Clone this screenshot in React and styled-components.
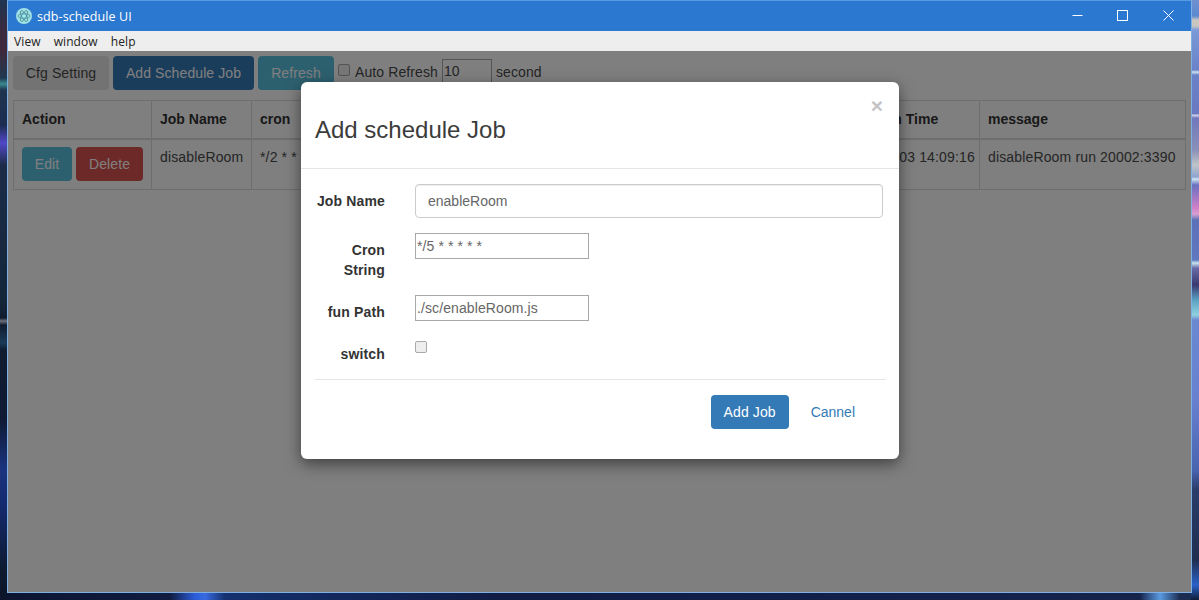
import React from "react";
import styled, { createGlobalStyle } from "styled-components";

const TEXT = "#333333";
const SOFT = "#4a4a4a";
const LINE = "#dddddd";

const Global = createGlobalStyle`
  html, body {
    margin: 0;
    height: 100%;
    overflow: hidden;
    background: #0d1a35;
  }
  * { box-sizing: border-box; }
  #root { height: 100%; }
`;

// wallpaper only shows as a thin strip on three sides of the window
const Desktop = styled.div`
  width: 1199px;
  height: 600px;
  padding: 0 7px;
  background:
    linear-gradient(180deg,
      #6f8fd0 0, #5b8ad0 16px, #c9c6c0 20px, #c9c6c0 26px, #7a9ad8 30px,
      #6a82c8 70px, #cfe2f2 72px, #6a82c8 75px,
      #6a78c0 114px, #d8dcec 115px, #7078bc 118px,
      #8a90b8 150px, #c0c4c8 165px, #8fa4d0 177px, #d0e4f0 179px, #6c70c0 185px,
      #d080c8 208px, #d8a0d0 214px, #5c70b8 220px,
      #5f78c0 260px, #c8e4f0 263px, #6a6aa8 268px, #3a3a70 285px,
      #5aa0c0 300px, #90d0e0 315px, #6a88d0 320px,
      #6880d0 400px, #4a64b0 470px, #2a3c68 490px, #1f2e50 560px, #2a62c8 585px, #0f1c38 600px)
      right top / 8px 600px no-repeat,
    linear-gradient(180deg,
      #1f3550 0, #3a2a40 30px, #40283c 50px, #1f3a50 78px, #3a8a90 84px, #1f3550 90px,
      #1c2c50 125px, #5048c8 143px, #1c2c48 165px,
      #14263a 300px, #101c30 318px, #70707c 321px, #101c30 325px,
      #1a3a58 343px, #0f1c30 350px,
      #0f1a34 420px, #1a3480 470px, #14286a 510px, #0d1a30 570px, #0b1428 600px)
      left top / 7px 600px no-repeat,
    linear-gradient(90deg,
      #0b1530 0, #101c40 170px, #2c5cd8 195px, #3a6ae0 205px, #14306e 225px,
      #101c44 500px, #12204a 900px, #16244c 1140px, #5a9ae0 1160px, #1c2c50 1180px)
      left bottom / 100% 7px no-repeat,
    #0d1a35;
`;

const Window = styled.div`
  height: 593px;
  display: flex;
  flex-direction: column;
  border: 1px solid #7fb0e4;
  border-top-color: #5a9ae0;
  font-family: "Liberation Sans", Arial, sans-serif;
  font-size: 14px;
  color: ${TEXT};
`;

const TitleBar = styled.div`
  flex: 0 0 30px;
  display: flex;
  align-items: center;
  padding-left: 8px;
  background: #2b78d0;
  color: #fff;
`;

const AppIcon = styled.svg`
  width: 16px;
  height: 16px;
  margin-right: 5px;
`;

const AppTitle = styled.span`
  font-family: "Open Sans", "Noto Sans", sans-serif;
  font-size: 12.5px;
  letter-spacing: 0.1px;
  flex: 1;
`;

const WinButton = styled.div`
  width: ${(p) => p.$w}px;
  height: 30px;
  padding-bottom: 1px;
  display: flex;
  align-items: center;
  justify-content: center;
`;

const MenuBar = styled.div`
  flex: 0 0 20px;
  display: flex;
  align-items: center;
  gap: 13px;
  padding-left: 6px;
  background: #eeeeee;
  font-family: "Open Sans", "Noto Sans", sans-serif;
  font-size: 12px;
  letter-spacing: 0.1px;
  color: #222;
`;

const Content = styled.div`
  position: relative;
  flex: 1;
  background: #fff;
  padding: 5px 5px 0 5px;
`;

const Toolbar = styled.div`
  display: flex;
  align-items: flex-start;
  gap: 4px;
  height: 44px;
`;

const tones = {
  default: { bg: "#e6e6e6", fg: SOFT, w: 96 },
  primary: { bg: "#337ab7", fg: "#fff", w: 141 },
  info: { bg: "#5bc0de", fg: "#fff", w: 76 },
  danger: { bg: "#d9534f", fg: "#fff", w: 67 },
};

const Btn = styled.div`
  flex: none;
  height: 34px;
  width: ${(p) => (p.$w ? p.$w : tones[p.$tone].w)}px;
  display: flex;
  align-items: center;
  justify-content: center;
  border-radius: 4px;
  letter-spacing: 0.1px;
  background: ${(p) => tones[p.$tone].bg};
  color: ${(p) => tones[p.$tone].fg};
`;

const BoxCheck = styled.span`
  flex: none;
  width: 12px;
  height: 12px;
  margin-top: ${(p) => p.$top}px;
  margin-right: 1px;
  border: 1px solid #a9a9a9;
  border-radius: 2px;
  background: #eeeeee;
`;

const AutoLabel = styled.span`
  line-height: 20px;
  margin-top: 6px;
  letter-spacing: 0.1px;
  color: ${SOFT};
`;

const SmallInput = styled.div`
  flex: none;
  width: 50px;
  height: 26px;
  margin-top: 3px;
  padding: 3px 1px;
  border: 1px solid #a9a9a9;
  color: ${SOFT};
`;

const Table = styled.table`
  width: 1173px;
  table-layout: fixed;
  border-collapse: collapse;
  border: 1px solid ${LINE};
`;

const Th = styled.th`
  height: 38px;
  padding: 8px;
  text-align: left;
  font-weight: 700;
  white-space: nowrap;
  overflow: hidden;
  border: 1px solid ${LINE};
  border-bottom-width: 2px;
`;

const Td = styled.td`
  height: 50px;
  padding: 7px 8px 8px;
  vertical-align: top;
  white-space: nowrap;
  overflow: hidden;
  line-height: 20px;
  letter-spacing: 0.15px;
  color: ${SOFT};
  border: 1px solid ${LINE};
`;

const ActionCell = styled.div`
  display: flex;
  gap: 4px;
`;

const Backdrop = styled.div`
  position: absolute;
  inset: 0;
  background: rgba(0, 0, 0, 0.5);
`;

const ModalLayer = styled.div`
  position: absolute;
  left: 0;
  right: 0;
  top: 31px;
  display: flex;
  justify-content: center;
`;

const Modal = styled.div`
  width: 598px;
  margin-left: 1px;
  background: #fff;
  border-radius: 6px;
  box-shadow: 0 5px 15px rgba(0, 0, 0, 0.5);
`;

const ModalHeader = styled.div`
  position: relative;
  height: 87px;
  padding: 32px 14px 0;
  border-bottom: 1px solid #e5e5e5;
`;

const ModalTitle = styled.div`
  font-size: 24px;
  line-height: 32px;
  color: #3c3c3c;
`;

const Close = styled.span`
  position: absolute;
  top: 12px;
  right: 16px;
  font-size: 21px;
  font-weight: 700;
  line-height: 24px;
  color: #c4c4c4;
`;

const ModalBody = styled.div`
  padding: 15px 15px 0 15px;
  height: 210px;
`;

const Divider = styled.div`
  border-top: 1px solid #e5e5e5;
  margin: 0 13px 0 14px;
`;

const Row = styled.div`
  display: flex;
  gap: 30px;
  margin-bottom: 15px;
`;

const Label = styled.label`
  flex: 0 0 69px;
  margin-top: 7px;
  text-align: right;
  font-weight: 700;
  line-height: 20px;
  letter-spacing: 0.15px;
`;

const TextInput = styled.div`
  flex: 1;
  height: 34px;
  margin-right: 1px;
  padding: 6px 12px;
  line-height: 20px;
  border: 1px solid #ccc;
  border-radius: 4px;
  color: #666;
  box-shadow: inset 0 1px 1px rgba(0, 0, 0, 0.075);
`;

const PlainInput = styled.div`
  flex: none;
  width: 174px;
  height: 26px;
  padding: 2px 1px;
  line-height: 20px;
  letter-spacing: 0.1px;
  border: 1px solid #a9a9a9;
  color: #666;
`;

const ModalFooter = styled.div`
  display: flex;
  align-items: center;
  justify-content: flex-end;
  padding: 15px 44px 30px 0;
`;

const SubmitBtn = styled.div`
  width: 78px;
  height: 34px;
  display: flex;
  align-items: center;
  justify-content: center;
  border-radius: 4px;
  letter-spacing: 0.1px;
  background: #337ab7;
  color: #fff;
`;

const CancelLink = styled.span`
  margin-left: 22px;
  color: #337ab7;
`;

export default function App() {
  return (
    <Desktop>
      <Global />
      <Window>
        <TitleBar>
          <AppIcon viewBox="0 0 16 16">
            <circle cx="8" cy="8" r="8" fill="#9fe0e4" />
            <g fill="none" stroke="#4a8f9a" strokeWidth="0.8">
              <ellipse cx="8" cy="8" rx="6" ry="2.4" />
              <ellipse cx="8" cy="8" rx="6" ry="2.4" transform="rotate(60 8 8)" />
              <ellipse cx="8" cy="8" rx="6" ry="2.4" transform="rotate(120 8 8)" />
            </g>
          </AppIcon>
          <AppTitle>sdb-schedule UI</AppTitle>
          <WinButton $w={45}>
            <svg width="11" height="11" viewBox="0 0 11 11">
              <path d="M0.5 5.5h10" stroke="#fff" strokeWidth="1" />
            </svg>
          </WinButton>
          <WinButton $w={45}>
            <svg width="11" height="11" viewBox="0 0 11 11">
              <rect x="0.5" y="0.5" width="10" height="10" fill="none" stroke="#fff" />
            </svg>
          </WinButton>
          <WinButton $w={46}>
            <svg width="11" height="11" viewBox="0 0 11 11">
              <path d="M0.5 0.5l10 10M10.5 0.5l-10 10" stroke="#fff" strokeWidth="1" />
            </svg>
          </WinButton>
        </TitleBar>
        <MenuBar>
          <span>View</span>
          <span>window</span>
          <span>help</span>
        </MenuBar>
        <Content>
          <Toolbar>
            <Btn $tone="default">Cfg Setting</Btn>
            <Btn $tone="primary">Add Schedule Job</Btn>
            <Btn $tone="info">Refresh</Btn>
            <BoxCheck $top={8} />
            <AutoLabel>Auto Refresh</AutoLabel>
            <SmallInput>10</SmallInput>
            <AutoLabel>second</AutoLabel>
          </Toolbar>
          <Table>
            <colgroup>
              <col style={{ width: 138 }} />
              <col style={{ width: 100 }} />
              <col style={{ width: 150 }} />
              <col style={{ width: 160 }} />
              <col style={{ width: 100 }} />
              <col style={{ width: 172 }} />
              <col style={{ width: 146 }} />
              <col />
            </colgroup>
            <thead>
              <tr>
                <Th>Action</Th>
                <Th>Job Name</Th>
                <Th>cron</Th>
                <Th />
                <Th />
                <Th />
                <Th>Last Run Time</Th>
                <Th>message</Th>
              </tr>
            </thead>
            <tbody>
              <tr>
                <Td>
                  <ActionCell>
                    <Btn $tone="info" $w={50}>Edit</Btn>
                    <Btn $tone="danger">Delete</Btn>
                  </ActionCell>
                </Td>
                <Td>disableRoom</Td>
                <Td>*/2 * * * * *</Td>
                <Td />
                <Td />
                <Td />
                <Td>2018-01-03 14:09:16</Td>
                <Td>disableRoom run 20002:3390</Td>
              </tr>
            </tbody>
          </Table>
          <Backdrop />
          <ModalLayer>
            <Modal>
              <ModalHeader>
                <ModalTitle>Add schedule Job</ModalTitle>
                <Close>×</Close>
              </ModalHeader>
              <ModalBody>
                <Row>
                  <Label>Job Name</Label>
                  <TextInput>enableRoom</TextInput>
                </Row>
                <Row>
                  <Label>Cron String</Label>
                  <PlainInput>*/5 * * * * *</PlainInput>
                </Row>
                <Row>
                  <Label>fun Path</Label>
                  <PlainInput>./sc/enableRoom.js</PlainInput>
                </Row>
                <Row>
                  <Label>switch</Label>
                  <BoxCheck $top={4} />
                </Row>
              </ModalBody>
              <Divider />
              <ModalFooter>
                <SubmitBtn>Add Job</SubmitBtn>
                <CancelLink>Cannel</CancelLink>
              </ModalFooter>
            </Modal>
          </ModalLayer>
        </Content>
      </Window>
    </Desktop>
  );
}
